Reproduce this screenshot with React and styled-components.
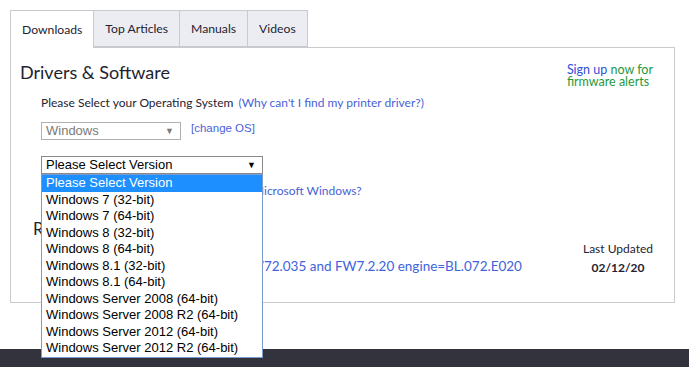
import React from "react";
import styled, { createGlobalStyle } from "styled-components";

const GlobalStyle = createGlobalStyle`
  html, body {
    margin: 0;
    padding: 0;
    background: #ffffff;
  }
  body {
    font-family: Lato, "Open Sans", sans-serif;
    color: #222;
  }
`;

const tabs = ["Downloads", "Top Articles", "Manuals", "Videos"];

const versions = [
  "Please Select Version",
  "Windows 7 (32-bit)",
  "Windows 7 (64-bit)",
  "Windows 8 (32-bit)",
  "Windows 8 (64-bit)",
  "Windows 8.1 (32-bit)",
  "Windows 8.1 (64-bit)",
  "Windows Server 2008 (64-bit)",
  "Windows Server 2008 R2 (64-bit)",
  "Windows Server 2012 (64-bit)",
  "Windows Server 2012 R2 (64-bit)",
];

function App() {
  return (
    <Page>
      <GlobalStyle />
      <Content>
        <TabBar>
          {tabs.map((t, i) => (
            <Tab key={t} active={i === 0}>
              {t}
            </Tab>
          ))}
        </TabBar>
        <Panel>
          <HeaderRow>
            <Title>Drivers &amp; Software</Title>
            <Alerts>
              <Blue>Sign up</Blue> now for
              <br />
              firmware alerts
            </Alerts>
          </HeaderRow>

          <Form>
            <Label>
              Please Select your Operating System <Link>(Why can't I find my printer driver?)</Link>
            </Label>

            <OsRow>
              <FakeSelect width={140} muted>
                Windows
                <Arrow muted>▼</Arrow>
              </FakeSelect>
              <SmallLink>[change OS]</SmallLink>
            </OsRow>

            <VersionWrap>
              <FakeSelect width={222}>
                Please Select Version
                <Arrow>▼</Arrow>
              </FakeSelect>
              <Options>
                {versions.map((v, i) => (
                  <Option key={v} selected={i === 0}>
                    {v}
                  </Option>
                ))}
              </Options>
            </VersionWrap>

            <HelpLink>How do I find out which version I use of Microsoft Windows?</HelpLink>
          </Form>

          <SectionTitle>Recommended Downloads</SectionTitle>

          <DownloadRow>
            <DownloadLink>Firmware Update SEC_FW72.035 and FW7.2.20 engine=BL.072.E020</DownloadLink>
            <Updated>
              <UpdatedLabel>Last Updated</UpdatedLabel>
              <UpdatedDate>02/12/20</UpdatedDate>
            </Updated>
          </DownloadRow>
        </Panel>
      </Content>
      <Footer />
    </Page>
  );
}

const Page = styled.div`
  min-height: 367px;
  display: flex;
  flex-direction: column;
`;

const Content = styled.div`
  padding: 10px 14px 0 10px;
  height: 339px;
  box-sizing: border-box;
`;

const TabBar = styled.div`
  display: flex;
  height: 37px;
`;

const Tab = styled.div`
  box-sizing: border-box;
  height: ${(p) => (p.active ? "38px" : "37px")};
  padding: 0 11px;
  display: flex;
  align-items: center;
  font-size: 12.2px;
  color: #1f2330;
  background: ${(p) => (p.active ? "#ffffff" : "#ecedf3")};
  border: 1px solid #c9cacf;
  border-bottom: ${(p) => (p.active ? "none" : "1px solid #c9cacf")};
  border-left-width: ${(p) => (p.active ? "1px" : "0")};
  position: relative;
  z-index: ${(p) => (p.active ? 1 : 0)};
`;

const Panel = styled.div`
  border: 1px solid #c9cacf;
  height: 256px;
  box-sizing: border-box;
  padding: 0 20px 0 9px;
  position: relative;
`;

const HeaderRow = styled.div`
  display: flex;
  justify-content: space-between;
  align-items: flex-start;
  padding-top: 13px;
`;

const Title = styled.h2`
  margin: 0;
  font-size: 18px;
  font-weight: 400;
  color: #1f2330;
  line-height: 22px;
`;

const Alerts = styled.div`
  font-size: 12.5px;
  line-height: 12px;
  color: #1e9a3c;
  margin-top: 3px;
  margin-right: 1px;
`;

const Blue = styled.span`
  color: #2f4fd6;
`;

const Form = styled.div`
  padding-left: 21px;
  margin-top: 7px;
`;

const Label = styled.div`
  font-size: 12px;
  line-height: 16px;
  color: #1f2330;
`;

const Link = styled.span`
  color: #4a5fd8;
  margin-left: 2px;
`;

const OsRow = styled.div`
  display: flex;
  align-items: flex-start;
  gap: 10px;
  margin-top: 11px;
`;

const FakeSelect = styled.div`
  box-sizing: border-box;
  width: ${(p) => p.width}px;
  height: 18px;
  border: 1px solid ${(p) => (p.muted ? "#b0b0b0" : "#8a8a8a")};
  background: #fff;
  font-family: "Liberation Sans", Arial, sans-serif;
  font-size: 13px;
  line-height: 16px;
  padding-left: 4px;
  color: ${(p) => (p.muted ? "#7a7a7a" : "#000")};
  display: flex;
  justify-content: space-between;
  align-items: center;
`;

const Arrow = styled.span`
  font-size: 9px;
  color: ${(p) => (p.muted ? "#7a7a7a" : "#000")};
  margin-right: 6px;
`;

const SmallLink = styled.span`
  font-family: "Liberation Sans", Arial, sans-serif;
  font-size: 11.5px;
  color: #4a5fd8;
`;

const VersionWrap = styled.div`
  position: relative;
  margin-top: 16px;
  width: 222px;
`;

const Options = styled.div`
  position: absolute;
  top: 18px;
  left: 0;
  width: 222px;
  box-sizing: border-box;
  border: 1px solid #7a9bd0;
  background: #fff;
  z-index: 5;
`;

const Option = styled.div`
  height: 16.5px;
  line-height: 16.5px;
  padding-left: 4px;
  font-family: "Liberation Sans", Arial, sans-serif;
  font-size: 13px;
  white-space: nowrap;
  background: ${(p) => (p.selected ? "#1e8fff" : "transparent")};
  color: ${(p) => (p.selected ? "#fff" : "#000")};
`;

const HelpLink = styled.div`
  margin-top: 9px;
  font-size: 12px;
  color: #4a5fd8;
  white-space: nowrap;
`;

const SectionTitle = styled.div`
  margin-top: 21px;
  padding-left: 13px;
  font-size: 17px;
  line-height: 20px;
  color: #1f2330;
`;

const DownloadRow = styled.div`
  display: flex;
  justify-content: space-between;
  align-items: flex-start;
  margin-top: 1px;
  padding-left: 86px;
`;

const DownloadLink = styled.div`
  font-size: 13.5px;
  color: #3e63dd;
  margin-top: 18px;
  white-space: nowrap;
`;

const Updated = styled.div`
  text-align: center;
  margin-right: 1px;
`;

const UpdatedLabel = styled.div`
  font-size: 12px;
  line-height: 18px;
  color: #1f2330;
`;

const UpdatedDate = styled.div`
  font-size: 12px;
  line-height: 20px;
  font-weight: 700;
  color: #1f2330;
`;

const Footer = styled.div`
  height: 18px;
  margin-top: 10px;
  background: #33333d;
`;

export default App;
